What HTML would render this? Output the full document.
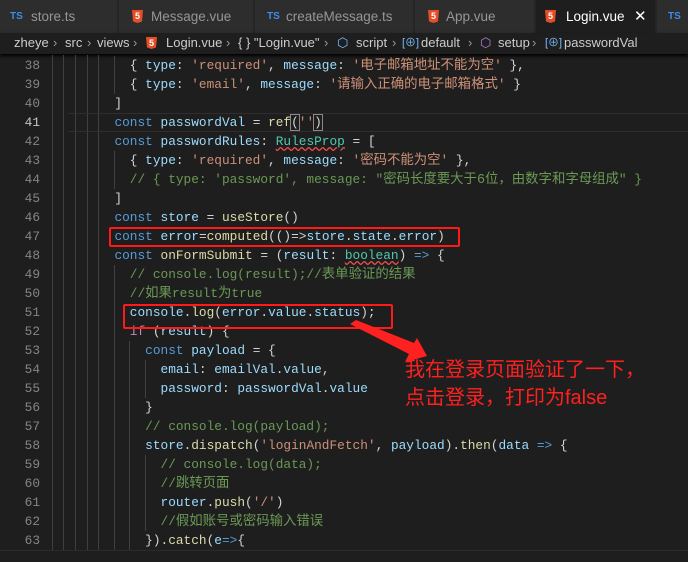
<!DOCTYPE html>
<html><head><meta charset="utf-8"><style>
*{margin:0;padding:0;box-sizing:border-box}
body{width:688px;height:562px;background:#1e1e1e;overflow:hidden;position:relative;font-family:"Liberation Sans","Noto Sans CJK SC",sans-serif}
.tabs{position:absolute;left:0;top:0;width:688px;height:33px;background:#252526}
.tab{position:absolute;top:0;height:33px;background:#2d2d2d;border-right:1px solid #252526;color:#969696;font-size:13.5px;line-height:33px}
.tab.act{background:#1e1e1e;color:#fff}
.ts{position:absolute;color:#3b8eea;font-weight:bold;font-size:10px;top:0}
.h5{position:absolute;top:10px;width:11px;height:13px;background:#e44d26;clip-path:polygon(0 0,100% 0,91% 88%,50% 100%,9% 88%);color:#fff;font-size:9px;line-height:13px;text-align:center;font-weight:bold}
.bc{position:absolute;left:0;top:33px;width:688px;height:21px;background:#1e1e1e;color:#cccccc;font-size:13px;line-height:20px;box-shadow:0 2px 3px #000}
.bc span{position:absolute;top:0}
.ln{position:absolute;left:0;width:40px;text-align:right;color:#858585;font:12.8px/19px "Liberation Mono","Noto Sans CJK SC",monospace}
.code{position:absolute;left:53px;white-space:pre;color:#d4d4d4;font:12.8px/19px "Liberation Mono","Noto Sans CJK SC",monospace}
.g{position:absolute;width:1px;background:#404040}
.k{color:#569cd6}.v{color:#9cdcfe}.f{color:#dcdcaa}.s{color:#ce9178}.c{color:#6a9955}.t{color:#4ec9b0}.p{color:#c586c0}
.z{font-size:13.4px}
.box{position:absolute;border:2px solid #ff1a1a;border-radius:2px}
.note{position:absolute;left:405px;color:#ff2020;font-size:20px;line-height:28px;font-family:"Liberation Sans","Noto Sans CJK SC",sans-serif}
</style></head><body>
<div class="tabs">
 <div class="tab" style="left:0;width:118px"><span class="ts" style="left:10px">TS</span><span style="position:absolute;left:31px">store.ts</span></div>
 <div class="tab" style="left:119px;width:135px"><span class="h5" style="left:13px">5</span><span style="position:absolute;left:32px">Message.vue</span></div>
 <div class="tab" style="left:255px;width:159px"><span class="ts" style="left:12px">TS</span><span style="position:absolute;left:31px">createMessage.ts</span></div>
 <div class="tab" style="left:415px;width:120px"><span class="h5" style="left:13px">5</span><span style="position:absolute;left:31px">App.vue</span></div>
 <div class="tab act" style="left:536px;width:120px"><span class="h5" style="left:9px">5</span><span style="position:absolute;left:30px">Login.vue</span><span style="position:absolute;left:98px;font-size:15px">✕</span></div>
 <div class="tab" style="left:657px;width:40px"><span class="ts" style="left:11px">TS</span></div>
</div>
<div class="bc">
 <span style="left:14px">zheye</span><span style="left:53px;color:#999">›</span><span style="left:65px">src</span><span style="left:87px;color:#999">›</span><span style="left:97px">views</span><span style="left:133px;color:#999">›</span>
 <span class="h5" style="left:146px;top:4px;height:12px">5</span><span style="left:166px">Login.vue</span><span style="left:226px;color:#999">›</span>
 <span style="left:238px">{ } "Login.vue"</span><span style="left:324px;color:#999">›</span>
 <span style="left:337px;color:#75beff">⬡</span><span style="left:356px">script</span><span style="left:392px;color:#999">›</span>
 <span style="left:402px;color:#75beff;font-size:11px">[⊕]</span><span style="left:421px">default</span><span style="left:468px;color:#999">›</span>
 <span style="left:480px;color:#b180d7">⬡</span><span style="left:498px">setup</span><span style="left:532px;color:#999">›</span>
 <span style="left:545px;color:#75beff;font-size:11px">[⊕]</span><span style="left:564px">passwordVal</span>
</div>

<div class="g" style="left:52px;top:55px;height:495px"></div>
<div class="g" style="left:63px;top:55px;height:495px"></div>
<div class="g" style="left:75px;top:55px;height:495px"></div>
<div class="g" style="left:87px;top:55px;height:495px"></div>
<div class="g" style="left:98px;top:55px;height:495px"></div>
<div class="g" style="left:114px;top:56px;height:38px"></div>
<div class="g" style="left:114px;top:151px;height:38px"></div>
<div class="g" style="left:114px;top:265px;height:285px"></div>
<div class="g" style="left:129px;top:341px;height:209px"></div>
<div class="g" style="left:145px;top:360px;height:38px"></div>
<div class="g" style="left:145px;top:455px;height:76px"></div>

<div style="position:absolute;left:68px;top:113px;width:620px;height:19px;border-top:1px solid #2e2e2e;border-bottom:1px solid #2e2e2e"></div>

<div class="ln" style="top:56px">38</div><div class="ln" style="top:75px">39</div><div class="ln" style="top:94px">40</div><div class="ln" style="top:113px;color:#c6c6c6">41</div><div class="ln" style="top:132px">42</div><div class="ln" style="top:151px">43</div><div class="ln" style="top:170px">44</div><div class="ln" style="top:189px">45</div><div class="ln" style="top:208px">46</div><div class="ln" style="top:227px">47</div><div class="ln" style="top:246px">48</div><div class="ln" style="top:265px">49</div><div class="ln" style="top:284px">50</div><div class="ln" style="top:303px">51</div><div class="ln" style="top:322px">52</div><div class="ln" style="top:341px">53</div><div class="ln" style="top:360px">54</div><div class="ln" style="top:379px">55</div><div class="ln" style="top:398px">56</div><div class="ln" style="top:417px">57</div><div class="ln" style="top:436px">58</div><div class="ln" style="top:455px">59</div><div class="ln" style="top:474px">60</div><div class="ln" style="top:493px">61</div><div class="ln" style="top:512px">62</div><div class="ln" style="top:531px">63</div>

<div class="code" style="top:56px">          { <span class="v">type</span>: <span class="s">'required'</span>, <span class="v">message</span>: <span class="s">'<span class="z">电子邮箱地址不能为空</span>'</span> },</div>
<div class="code" style="top:75px">          { <span class="v">type</span>: <span class="s">'email'</span>, <span class="v">message</span>: <span class="s">'<span class="z">请输入正确的电子邮箱格式</span>'</span> }</div>
<div class="code" style="top:94px">        ]</div>
<div class="code" style="top:113px">        <span class="k">const</span> <span class="v">passwordVal</span> = <span class="f">ref</span><span style="outline:1px solid #888">(</span><span class="s">''</span><span style="outline:1px solid #888">)</span></div>
<div class="code" style="top:132px">        <span class="k">const</span> <span class="v">passwordRules</span>: <span class="t" style="text-decoration:underline wavy #f14c4c">RulesProp</span> = [</div>
<div class="code" style="top:151px">          { <span class="v">type</span>: <span class="s">'required'</span>, <span class="v">message</span>: <span class="s">'<span class="z">密码不能为空</span>'</span> },</div>
<div class="code" style="top:170px">          <span class="c">// { type: 'password', message: "<span class="z">密码长度要大于6位，由数字和字母组成</span>" }</span></div>
<div class="code" style="top:189px">        ]</div>
<div class="code" style="top:208px">        <span class="k">const</span> <span class="v">store</span> = <span class="f">useStore</span>()</div>
<div class="code" style="top:227px">        <span class="k">const</span> <span class="v">error</span>=<span class="f">computed</span>(()=&gt;<span class="v">store</span>.<span class="v">state</span>.<span class="v">error</span>)</div>
<div class="code" style="top:246px">        <span class="k">const</span> <span class="f">onFormSubmit</span> = (<span class="v">result</span>: <span class="t" style="text-decoration:underline wavy #f14c4c">boolean</span>) <span class="k">=&gt;</span> {</div>
<div class="code" style="top:265px">          <span class="c">// console.log(result);//<span class="z">表单验证的结果</span></span></div>
<div class="code" style="top:284px">          <span class="c">//<span class="z">如果</span>result<span class="z">为</span>true</span></div>
<div class="code" style="top:303px">          <span class="v">console</span>.<span class="f">log</span>(<span class="v">error</span>.<span class="v">value</span>.<span class="v">status</span>);</div>
<div class="code" style="top:322px">          <span class="p">if</span> (<span class="v">result</span>) {</div>
<div class="code" style="top:341px">            <span class="k">const</span> <span class="v">payload</span> = {</div>
<div class="code" style="top:360px">              <span class="v">email</span>: <span class="v">emailVal</span>.<span class="v">value</span>,</div>
<div class="code" style="top:379px">              <span class="v">password</span>: <span class="v">passwordVal</span>.<span class="v">value</span></div>
<div class="code" style="top:398px">            }</div>
<div class="code" style="top:417px">            <span class="c">// console.log(payload);</span></div>
<div class="code" style="top:436px">            <span class="v">store</span>.<span class="f">dispatch</span>(<span class="s">'loginAndFetch'</span>, <span class="v">payload</span>).<span class="f">then</span>(<span class="v">data</span> <span class="k">=&gt;</span> {</div>
<div class="code" style="top:455px">              <span class="c">// console.log(data);</span></div>
<div class="code" style="top:474px">              <span class="c">//<span class="z">跳转页面</span></span></div>
<div class="code" style="top:493px">              <span class="v">router</span>.<span class="f">push</span>(<span class="s">'/'</span>)</div>
<div class="code" style="top:512px">              <span class="c">//<span class="z">假如账号或密码输入错误</span></span></div>
<div class="code" style="top:531px">            }).<span class="f">catch</span>(<span class="v">e</span><span class="k">=&gt;</span>{</div>

<div style="position:absolute;left:0;top:550px;width:688px;height:12px;background:#1e1e1e;border-top:1px solid #2a2a2a"></div>

<div class="box" style="left:109px;top:227px;width:351px;height:20px"></div>
<div class="box" style="left:123px;top:304px;width:270px;height:25px"></div>
<svg style="position:absolute;left:0;top:0" width="688" height="562"><polygon points="350,324 356,320 414,343 417,338 427,356 405,362 409,354" fill="#ff2020"/></svg>
<div class="note" style="top:356px">我在登录页面验证了一下，</div>
<div class="note" style="top:384px">点击登录，打印为false</div>
</body></html>
